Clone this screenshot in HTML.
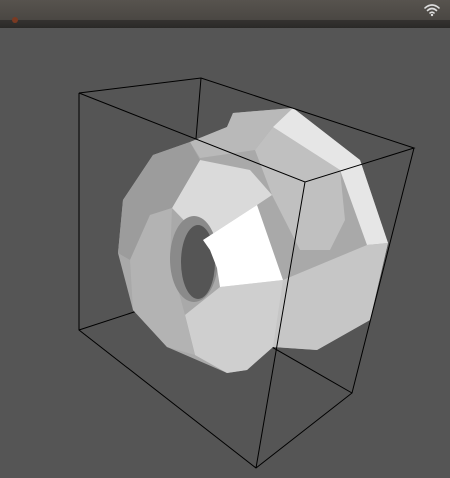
<!DOCTYPE html>
<html><head><style>
html,body{margin:0;padding:0;width:450px;height:478px;overflow:hidden;background:#555555;}
#top{position:absolute;left:0;top:0;width:450px;height:20px;background:linear-gradient(#57534e,#4a4743);}
#strip{position:absolute;left:0;top:20px;width:450px;height:8px;background:linear-gradient(#343230,#2a2927);}
svg{position:absolute;left:0;top:0;}
</style></head><body>
<div id="top"></div><div id="strip"></div>
<svg width="450" height="478" viewBox="0 0 450 478">
<circle cx="15" cy="20" r="3" fill="#7a3a22"/>
<g fill="none" stroke="#ddd" stroke-width="1.6" stroke-linecap="round">
<path d="M425 8 Q432 2 439 8"/><path d="M427.5 10.5 Q432 6.5 436.5 10.5"/><path d="M430 13 Q432 11.3 434 13"/>
</g>
<circle cx="432" cy="15" r="1.2" fill="#ddd"/>
<g stroke="#000" stroke-width="1" fill="none">
<path d="M201 78 L183 296 M79 330 L183 296 L352 393"/>
</g>
<polygon fill="#a9a9a9" points="233,113 293,108 360,160 388,243 370,320 317,350 273,347 247,370 227,373 167,347 133,310 118,253 123,200 153,155 190,142 227,127"/>
<polygon fill="#b9b9b9" points="227,127 233,113 293,108 273,127 255,150 200,158 190,142"/>
<polygon fill="#c0c0c0" points="273,127 340,170 345,220 330,250 300,250 272,195 255,150"/>
<polygon fill="#e6e6e6" points="293,108 360,160 388,243 367,245 340,170 273,127"/>
<polygon fill="#c6c6c6" points="283,280 367,245 388,243 370,320 317,350 273,347 250,330"/>
<polygon fill="#dadada" points="172,208 200,160 250,170 272,195 257,205 203,240"/>
<polygon fill="#cfcfcf" points="220,287 283,280 273,347 247,370 227,373 195,355 185,315"/>
<polygon fill="#9c9c9c" points="123,200 153,155 190,142 200,160 172,208 150,215 130,260 118,253"/>
<polygon fill="#b3b3b3" points="130,260 150,215 172,208 170,260 185,315 195,355 167,347 133,310"/>
<ellipse cx="194" cy="259" rx="24" ry="43" fill="#8a8a8a"/>
<ellipse cx="198" cy="262" rx="17" ry="37" fill="#555"/>
<polygon fill="#ffffff" points="203,240 257,205 283,280 220,287 217,268 210,250"/>
<g stroke="#000" stroke-width="1" fill="none">
<path d="M79 93 L201 78 L414 148 L305 182 Z M79 93 L79 330 L256 468 L352 393 L414 148 M305 182 L256 468"/>
</g>
</svg>
</body></html>
